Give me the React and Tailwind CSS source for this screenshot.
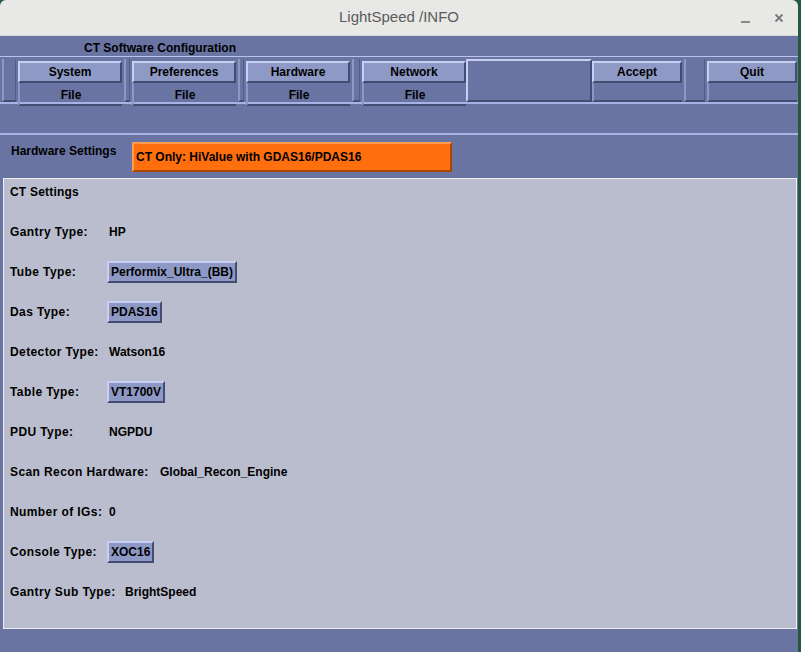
import React from "react";

const font = { fontFamily: '"Liberation Sans", Arial, sans-serif' };

const raised =
  "border-2 border-t-[#c8cff2] border-l-[#c8cff2] border-b-[#444c72] border-r-[#444c72]";

// top row: button over a "File" caption
const TabGroup = ({ label, sub, w }) => (
  <div className={`flex flex-col pt-[4px] ${w}`}>
    <div
      className={`h-[22px] flex items-center justify-center bg-[#8f99c6] ${raised} text-[12px] font-bold text-black`}
    >
      {label}
    </div>
    <div className="flex-1 flex items-center justify-center pt-[3px] border-l-2 border-l-[#8e98c6] border-b-2 border-b-[#444c72] text-[12px] font-bold text-black">
      {sub}
    </div>
  </div>
);

const Sep = ({ w }) => (
  <div className={`${w} pt-[2px] flex`}>
    <div className="flex-1 mx-[2px] border-l-2 border-l-[#8e98c6] border-r border-r-[#545d88] border-b-2 border-b-[#444c72]" />
  </div>
);

const FieldBtn = ({ children }) => (
  <span
    className={`inline-flex items-center h-[22px] px-[2px] bg-[#8e98c5] ${raised} text-[12px] font-bold text-black`}
  >
    {children}
  </span>
);

const rows = [
  { label: "Gantry Type:", value: "HP" },
  { label: "Tube Type:", value: "Performix_Ultra_(BB)", btn: true },
  { label: "Das Type:", value: "PDAS16", btn: true },
  { label: "Detector Type:", value: "Watson16" },
  { label: "Table Type:", value: "VT1700V", btn: true },
  { label: "PDU Type:", value: "NGPDU" },
  { label: "Scan Recon Hardware:", value: "Global_Recon_Engine", lw: "w-[148px]" },
  { label: "Number of IGs:", value: "0" },
  { label: "Console Type:", value: "XOC16", btn: true },
  { label: "Gantry Sub Type:", value: "BrightSpeed", lw: "w-[113px]" },
];

export default function App() {
  return (
    <div className="w-[801px] h-[652px] flex bg-[#24593f] overflow-hidden" style={font}>
      <div className="w-[798px] flex flex-col bg-[#6974a3] rounded-t-[6px] overflow-hidden">
        {/* title bar */}
        <div className="h-[36px] shrink-0 relative flex items-center justify-center bg-[#e8e8e7] border-b border-b-[#d6d6d4]">
          <span className="text-[15px] text-[#5b5b5b]">LightSpeed /INFO</span>
          <div className="absolute right-[14px] top-0 h-full flex items-center gap-[24px] text-[#6a6a6a]">
            <span className="w-[9px] h-[2px] bg-[#8a8a8a] mt-[8px]" />
            <svg width="10" height="10" viewBox="0 0 10 10">
              <path d="M1.5 1.5 L8.5 8.5 M8.5 1.5 L1.5 8.5" stroke="#7a7a7a" strokeWidth="1.8" />
            </svg>
          </div>
        </div>

        {/* header */}
        <div className="h-[21px] shrink-0 pl-[84px] pt-[5px] text-[12px] leading-[14px] font-bold text-black border-b border-b-[#b9c1ec]">
          CT Software Configuration
        </div>

        {/* menu row */}
        <div className="h-[47px] shrink-0 flex border-b-2 border-b-[#a9b2e4]">
          <Sep w="w-[18px]" />
          <TabGroup label="System" sub="File" w="w-[104px]" />
          <Sep w="w-[10px]" />
          <TabGroup label="Preferences" sub="File" w="w-[104px]" />
          <Sep w="w-[10px]" />
          <TabGroup label="Hardware" sub="File" w="w-[104px]" />
          <Sep w="w-[12px]" />
          <TabGroup label="Network" sub="File" w="w-[104px]" />
          <div className="w-[126px] pt-[2px] flex">
            <div className={`flex-1 ${raised} border-t-[#8e98c6] bg-[#6974a3]`} />
          </div>
          <TabGroup label="Accept" sub="" w="w-[90px]" />
          <Sep w="w-[25px]" />
          <TabGroup label="Quit" sub="" w="w-[90px]" />
          <div className="flex-1" />
        </div>

        {/* empty band */}
        <div className="h-[31px] shrink-0 border-b-2 border-b-[#a9b2e4]" />

        {/* hardware settings */}
        <div className="h-[43px] shrink-0 flex items-start pl-[11px] pt-[7px] gap-[11px]">
          <span className="text-[12px] font-bold text-black leading-[14px] whitespace-nowrap w-[110px] pt-[2px]">
            Hardware Settings
          </span>
          <div className="w-[320px] h-[30px] flex items-center pl-[2px] bg-[#ff6f0e] border-2 border-t-[#ff9a4e] border-l-[#ff9a4e] border-b-[#a84600] border-r-[#a84600] text-[12px] font-bold text-black">
            CT Only: HiValue with GDAS16/PDAS16
          </div>
        </div>

        {/* CT settings panel */}
        <div className="flex-1 mx-[3px] mr-[1px] bg-[#babdcd] border border-[#eef0f6] flex flex-col gap-[18px] pt-[2px] pl-[6px] text-[12px] font-bold text-black">
          <div className="h-[22px] flex items-center tracking-[0.2px]">CT Settings</div>
          {rows.map((r) => (
            <div key={r.label} className="h-[22px] flex items-center">
              <span className={`${r.lw || "w-[97px]"} whitespace-nowrap tracking-[0.4px]`}>{r.label}</span>
              {r.btn ? <FieldBtn>{r.value}</FieldBtn> : <span className="pl-[2px]">{r.value}</span>}
            </div>
          ))}
        </div>

        {/* bottom band */}
        <div className="h-[23px] shrink-0" />
      </div>
      <div className="flex-1" />
    </div>
  );
}
